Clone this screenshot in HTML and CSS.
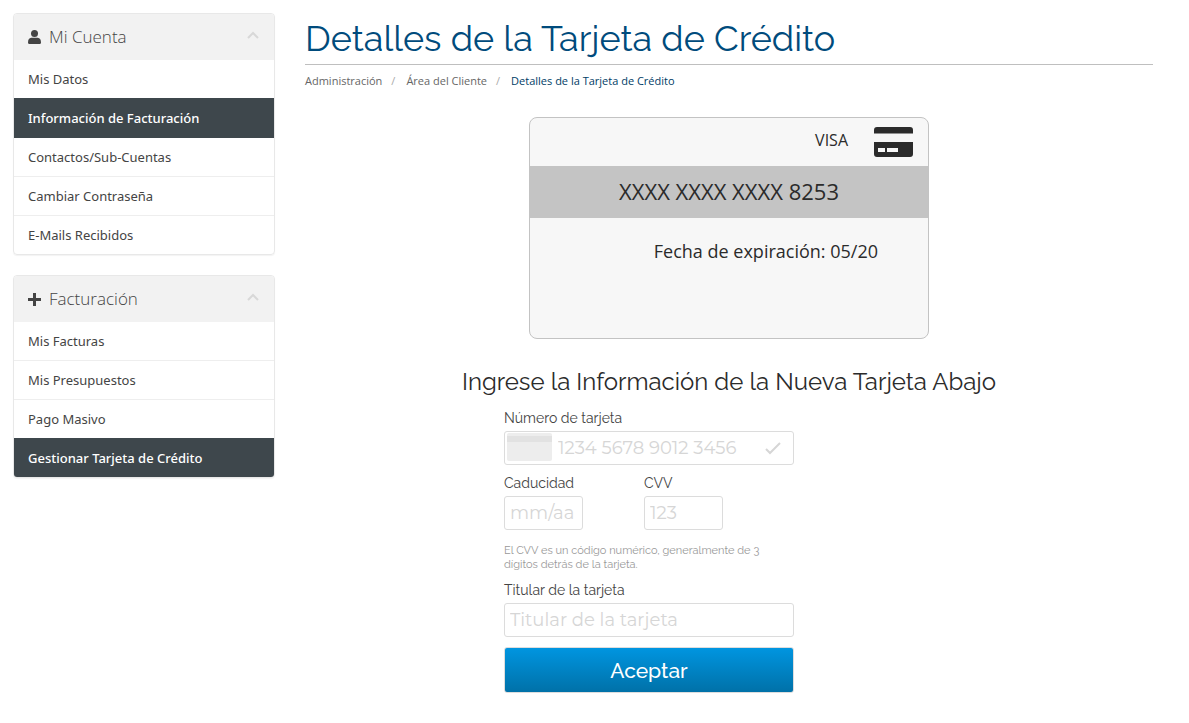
FILE: index.html
```html
<!DOCTYPE html>
<html lang="es">
<head>
    <meta charset="UTF-8">
    <title>Detalles de la Tarjeta de Crédito</title>
    <link rel="stylesheet" href="styles.css">
</head>
<body>

<div class="page">

    <!-- Sidebar -->
    <aside class="sidebar">
        <nav class="panel">
            <h3 class="panel-heading">
                <svg class="panel-icon" viewBox="0 0 13 14"><circle cx="6.5" cy="3.6" r="3.5"/><path d="M0 12.5C0 9.6 1.2 8 3.2 7.8h6.6C11.8 8 13 9.6 13 12.5q0 1.500-1.500 1.500h-10Q0 14 0 12.500z"/></svg>
                <span>Mi Cuenta</span>
                <svg class="chevron" viewBox="0 0 12 8"><path d="M1 7l5-5 5 5"/></svg>
            </h3>
            <div class="list">
                <a href="#">Mis Datos</a>
                <a href="#" class="active">Información de Facturación</a>
                <a href="#">Contactos/Sub-Cuentas</a>
                <a href="#">Cambiar Contraseña</a>
                <a href="#">E-Mails Recibidos</a>
            </div>
        </nav>

        <nav class="panel">
            <h3 class="panel-heading">
                <svg class="panel-icon" viewBox="0 0 13 14"><path d="M5 1h3v5h5v3H8v5H5V9H0V6h5z"/></svg>
                <span>Facturación</span>
                <svg class="chevron" viewBox="0 0 12 8"><path d="M1 7l5-5 5 5"/></svg>
            </h3>
            <div class="list">
                <a href="#">Mis Facturas</a>
                <a href="#">Mis Presupuestos</a>
                <a href="#">Pago Masivo</a>
                <a href="#" class="active">Gestionar Tarjeta de Crédito</a>
            </div>
        </nav>
    </aside>

    <!-- Main content -->
    <main class="content">
        <h1>Detalles de la Tarjeta de Crédito</h1>
        <ol class="breadcrumb">
            <li><a href="#">Administración</a></li>
            <li><a href="#">Área del Cliente</a></li>
            <li class="current">Detalles de la Tarjeta de Crédito</li>
        </ol>

        <!-- Current card -->
        <div class="credit-card">
            <div class="card-type">
                <span>VISA</span>
                <svg class="card-logo" viewBox="0 0 39 30"><path d="M0 6.500V3q0-3 3-3h33q3 0 3 3v3.500zM0 15h39v12q0 3-3 3H3q-3 0-3-3z"/><path class="chip" d="M4 21h7v4H4zM13 21h11v4H13z"/></svg>
            </div>
            <div class="card-number">XXXX XXXX XXXX 8253</div>
            <div class="card-expiry">Fecha de expiración: 05/20</div>
        </div>

        <h2>Ingrese la Información de la Nueva Tarjeta Abajo</h2>

        <!-- New card form -->
        <form class="card-form">
            <div class="field">
                <label for="cardNumber">Número de tarjeta</label>
                <div class="number-box">
                    <svg class="mini-card" viewBox="0 0 45 28"><rect width="45" height="28" rx="2" fill="#ededed"/><path d="M0 3h45v6H0z" fill="#e2e2e2"/></svg>
                    <input type="text" id="cardNumber" placeholder="1234 5678 9012 3456">
                    <svg class="check" viewBox="0 0 16 13"><path d="M1 7l4 4L15 1"/></svg>
                </div>
            </div>
            <div class="field-row">
                <div class="field">
                    <label for="expiry">Caducidad</label>
                    <input type="text" id="expiry" placeholder="mm/aa">
                </div>
                <div class="field">
                    <label for="cvv">CVV</label>
                    <input type="text" id="cvv" placeholder="123">
                </div>
            </div>
            <p class="help">El CVV es un código numérico, generalmente de 3 dígitos detrás de la tarjeta.</p>
            <div class="field">
                <label for="holder">Titular de la tarjeta</label>
                <input type="text" id="holder" placeholder="Titular de la tarjeta">
            </div>
            <button type="submit">Aceptar</button>
        </form>
    </main>

</div>

</body>
</html>
```
FILE: styles.css
```css
* {
    box-sizing: border-box;
}

body {
    margin: 0;
    font-family: "Open Sans", sans-serif;
    font-size: 13px;
    color: #2b2b2b;
    background-color: white;
}

a {
    text-decoration: none;
    color: inherit;
}

.page {
    display: flex;
    align-items: flex-start;
    gap: 30px;
    padding: 13px 36px 20px 13px;
}

/* Sidebar */
.sidebar {
    flex: 0 0 262px;
}

.panel {
    margin-bottom: 20px;
    border: 1px solid #e8e8e8;
    border-radius: 4px;
    overflow: hidden;
    box-shadow: 0 1px 1px rgba(0, 0, 0, 0.05);
}

.panel-heading {
    display: flex;
    align-items: center;
    gap: 8px;
    height: 46px;
    margin: 0;
    padding: 0 15px 2px 14px;
    font-size: 17px;
    font-weight: 300;
    color: #444;
    background-color: #f2f2f2;
}

.panel-icon {
    width: 13px;
    height: 14px;
    margin-top: 2px;
    fill: #444;
}

.chevron {
    width: 12px;
    height: 8px;
    margin-left: auto;
    margin-bottom: 2px;
    fill: none;
    stroke: #d8d8d8;
    stroke-width: 2;
}

.list {
    margin-top: -1px;
    font-family: "Noto Sans", "Open Sans", sans-serif;
}

.list a {
    display: block;
    padding: 0 14px;
    line-height: 38px;
    border-top: 1px solid #eee;
    color: #444;
}

.list a:first-child {
    border-top-color: #f2f2f2;
}

.list a.active {
    color: white;
    background-color: #3e474c;
    font-weight: 500;
}

.list a.active,
.list a.active + a {
    border-top-color: #3e474c;
}

/* Main content */
.content {
    flex: 1;
    min-width: 0;
}

h1, h2, .card-form, .card-form button {
    font-family: Raleway, Lato, sans-serif;
}

h1 {
    margin: 0;
    padding-top: 2px;
    padding-bottom: 2px;
    font-size: 36px;
    font-weight: 400;
    line-height: 47px;
    color: #004b7c;
    border-bottom: 1px solid #bfbfbf;
}

.breadcrumb {
    display: flex;
    margin: 8px 0 28px;
    padding: 0;
    list-style: none;
    font-size: 11px;
    line-height: 16px;
    color: #666;
}

.breadcrumb li + li::before {
    content: "/";
    padding: 0 11px 0 9px;
    color: #aaa;
}

.breadcrumb .current {
    color: #003d66;
}

.credit-card {
    width: 400px;
    min-height: 222px;
    margin: 0 auto;
    border: 1px solid #c3c3c3;
    border-radius: 8px;
    background-color: #f7f7f7;
}

.card-type {
    display: flex;
    justify-content: flex-end;
    gap: 26px;
    height: 48px;
    padding: 0 15px;
    font-size: 16px;
    line-height: 44px;
}

.card-logo {
    width: 39px;
    height: 30px;
    margin-top: 9px;
    fill: #2b2b2b;
}

.card-logo .chip {
    fill: #f7f7f7;
}

.card-number {
    padding-bottom: 2px;
    font-size: 22px;
    line-height: 50px;
    text-align: center;
    background-color: #c4c4c4;
}

.card-expiry {
    padding: 20px 50px;
    font-size: 18px;
    line-height: 26px;
    text-align: right;
}

h2 {
    margin: 28px 0 11px;
    font-size: 24px;
    font-weight: 400;
    line-height: 30px;
    text-align: center;
}

/* Form */
.card-form {
    max-width: 450px;
    margin: 0 auto;
    padding-right: 160px;
    color: #444;
}

.field label {
    display: block;
    margin-bottom: 3px;
    font-size: 14px;
    line-height: 20px;
}

.field input {
    display: block;
    width: 100%;
    height: 34px;
    padding: 0 5px;
    font-family: Montserrat, Raleway, sans-serif;
    font-size: 18px;
    color: #444;
    background-color: white;
    border: 1px solid #dcdcdc;
    border-radius: 3px;
}

.field input::placeholder {
    color: #d6d6d6;
}

.number-box {
    position: relative;
}

.number-box input {
    padding: 0 36px 0 53px;
}

.mini-card {
    position: absolute;
    top: 2px;
    left: 3px;
    width: 45px;
    height: 28px;
}

.check {
    position: absolute;
    top: 11px;
    right: 13px;
    width: 16px;
    height: 13px;
    fill: none;
    stroke: #d6d6d6;
    stroke-width: 2;
}

.field-row {
    display: flex;
    gap: 61px;
    margin-top: 8px;
}

.field-row .field {
    width: 79px;
}

.help {
    max-width: 270px;
    margin: 14px 0 8px;
    font-size: 11px;
    line-height: 14px;
    color: #999;
}

.card-form button {
    width: 100%;
    height: 46px;
    margin-top: 10px;
    font-size: 21px;
    font-weight: 500;
    color: white;
    background-image: linear-gradient(#0095e0, #0071a8);
    border: 1px solid #ddd;
    border-radius: 3px;
    cursor: pointer;
}
```
